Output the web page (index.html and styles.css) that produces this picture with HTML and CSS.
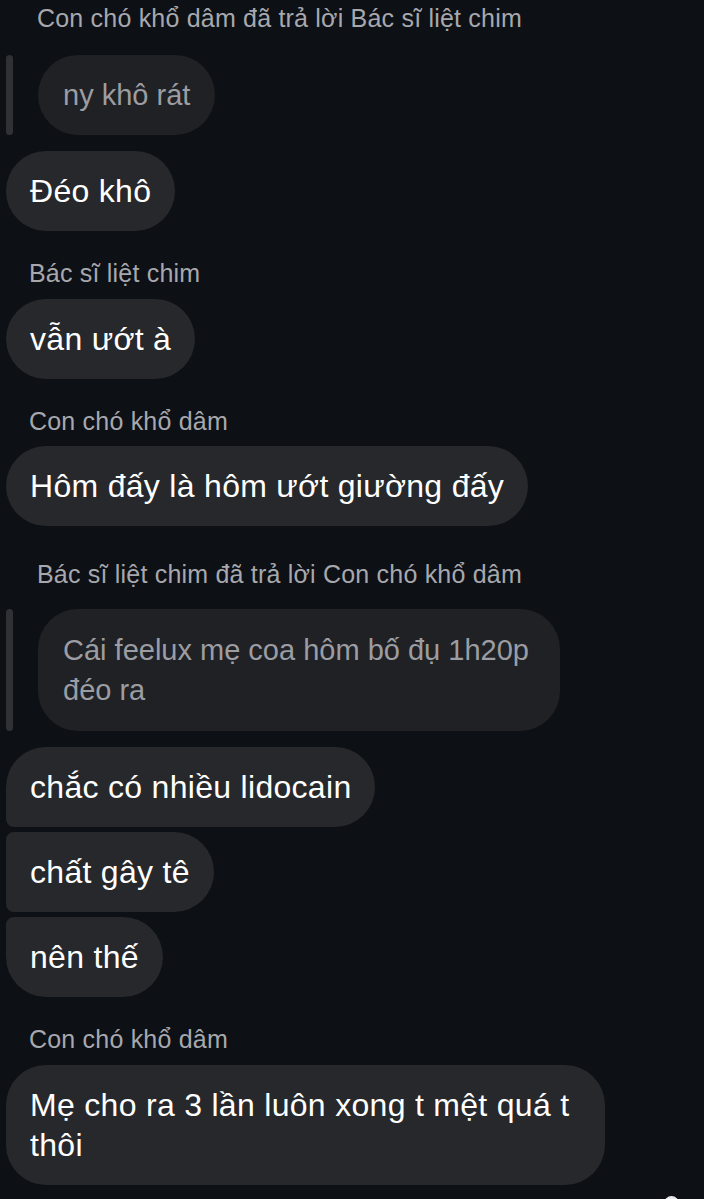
FILE: index.html
```html
<!DOCTYPE html>
<html lang="vi">
<head>
<meta charset="utf-8">
<title>Chat</title>
<link rel="stylesheet" href="styles.css">
</head>
<body>
<main class="chat">
  <div class="reply-head first">Con chó khổ dâm đã trả lời Bác sĩ liệt chim</div>
  <div class="reply">
    <span class="reply-bar"></span>
    <div class="reply-bubble">ny khô rát</div>
  </div>
  <div class="bubble gap-16">Đéo khô</div>

  <div class="sender gap-24">Bác sĩ liệt chim</div>
  <div class="bubble gap-8">vẫn ướt à</div>

  <div class="sender gap-24">Con chó khổ dâm</div>
  <div class="bubble gap-7">Hôm đấy là hôm ướt giường đấy</div>

  <div class="reply-head gap-30">Bác sĩ liệt chim đã trả lời Con chó khổ dâm</div>
  <div class="reply gap-17">
    <span class="reply-bar"></span>
    <div class="reply-bubble multi">Cái feelux mẹ coa hôm bố đụ 1h20p<br>đéo ra</div>
  </div>
  <div class="bubble gap-16 g-first">chắc có nhiều lidocain</div>
  <div class="bubble gap-5 g-mid">chất gây tê</div>
  <div class="bubble gap-5 g-last">nên thế</div>

  <div class="sender gap-24">Con chó khổ dâm</div>
  <div class="bubble gap-8 multi">Mẹ cho ra 3 lần luôn xong t mệt quá t<br>thôi</div>
</main>
<div class="home-dot"></div>
</body>
</html>
```
FILE: styles.css
```css
html, body {
  margin: 0;
  padding: 0;
  background: #0d1015;
}
body {
  width: 704px;
  height: 1199px;
  overflow: hidden;
  position: relative;
  font-family: "Liberation Sans", Arial, sans-serif;
}
.chat {
  display: flex;
  flex-direction: column;
  align-items: flex-start;
}
.reply-head,
.sender {
  font-size: 25px;
  letter-spacing: 0.2px;
  line-height: 36px;
  color: #a7a8ad;
}
.reply-head {
  padding-left: 37px;
}
.sender {
  padding-left: 29px;
}
.reply {
  display: flex;
  align-items: stretch;
  margin-top: 19px;
  padding-left: 6px;
}
.reply-bar {
  width: 7px;
  border-radius: 4px;
  background: #2f3135;
  margin-right: 25px;
}
.reply-bubble {
  box-sizing: border-box;
  background: #1f2125;
  color: #9c9da2;
  font-size: 29px;
  line-height: 40px;
  padding: 20px 25px;
  border-radius: 40px;
}
.reply-bubble.multi {
  width: 522px;
  padding: 21px 25px;
}
.bubble {
  box-sizing: border-box;
  margin-left: 6px;
  background: #26282c;
  color: #ffffff;
  font-size: 32px;
  letter-spacing: 0.3px;
  line-height: 40px;
  padding: 20px 24px;
  border-radius: 40px;
}
.bubble.multi {
  width: 599px;
}
.g-first { border-radius: 40px 40px 40px 8px; }
.g-mid { border-radius: 8px 40px 40px 8px; }
.g-last { border-radius: 8px 40px 40px 40px; }

.gap-5 { margin-top: 5px; }
.gap-7 { margin-top: 7px; }
.gap-8 { margin-top: 8px; }
.gap-16 { margin-top: 16px; }
.gap-17 { margin-top: 17px; }
.gap-24 { margin-top: 24px; }
.gap-30 { margin-top: 30px; }

.home-dot {
  position: absolute;
  left: 664px;
  top: 1196px;
  width: 15px;
  height: 15px;
  border-radius: 50%;
  background: #e8e8ea;
}
```
